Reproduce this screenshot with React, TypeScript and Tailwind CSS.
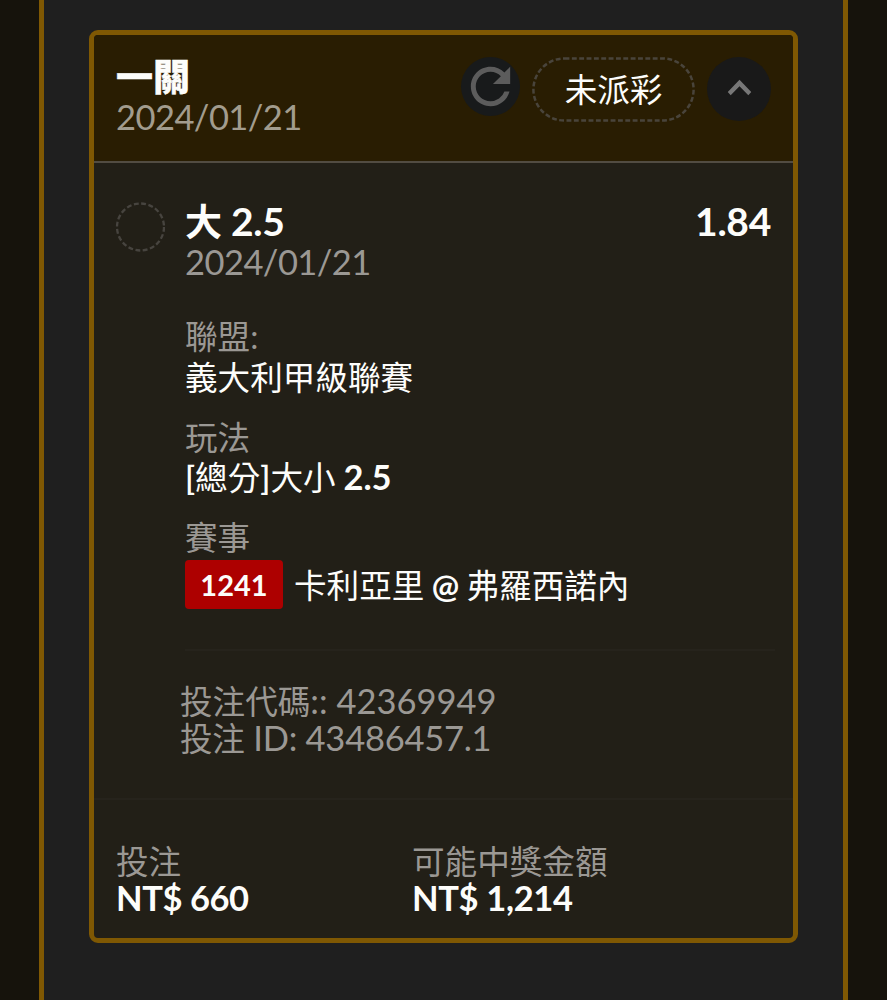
import React from 'react';

const Han: React.FC<{ children: React.ReactNode; className?: string }> = ({ children, className = 'text-[32.6px]' }) => (
    <span className={className}>{children}</span>
);

const Detail: React.FC<{ label: string; children: React.ReactNode }> = ({ label, children }) => (
    <div className="leading-[40px]">
        <div className="h-[40.5px] text-[#9b9894]"><Han>{label}</Han></div>
        <div className="h-10">{children}</div>
    </div>
);

const RefreshIcon = () => (
    <svg viewBox="0 0 24 24" className="size-[59px]" fill="#5c5c5c">
        <path d="M17.65 6.35A7.958 7.958 0 0 0 12 4c-4.42 0-7.99 3.58-7.99 8s3.57 8 7.99 8c3.73 0 6.84-2.55 7.73-6h-2.08A5.99 5.99 0 0 1 12 18c-3.31 0-6-2.69-6-6s2.69-6 6-6c1.66 0 3.14.69 4.22 1.78L13 11h7V4z" />
    </svg>
);

const ChevronUpIcon = () => (
    <svg viewBox="0 0 24 24" className="-mt-[3px] size-[47px]" fill="#777777">
        <path d="M12 8l-6 6.3 1.5 1.7L12 11.3l4.5 4.7L18 14.3z" />
    </svg>
);

export default function App() {
    return (
        <div
            className="h-[1000px] w-[887px] overflow-hidden bg-[#16130c] pr-[39px] pl-[39px] text-[34.5px] whitespace-nowrap text-[#fdfdfb]"
            style={{ fontFamily: 'Lato, "Noto Sans CJK TC", sans-serif' }}
        >
            <div className="h-full border-x-5 border-[#7f5803] bg-[#1f1f1f] px-[45px] pt-[30px]">
                <div className="flex h-[913px] flex-col overflow-hidden rounded-[9px] border-5 border-[#7f5803] bg-[#221f17]">
                    {/* Header */}
                    <div className="flex h-[128px] shrink-0 justify-between border-b-2 border-[#524c42] bg-[#291d02] pt-[21px] pr-[22px] pl-[22px]">
                        <div className="leading-[40px]">
                            <div className="h-[41px] text-[39px] font-black [-webkit-text-stroke:0.4px_currentColor]"><Han className="text-[37px]">一關</Han></div>
                            <div className="h-10 tracking-[-0.55px] text-[#a29c8e]">2024/01/21</div>
                        </div>
                        <div className="mt-px flex items-start">
                            <button className="mr-[12px] flex size-[59px] items-center justify-center rounded-full bg-[#181a1b]">
                                <RefreshIcon />
                            </button>
                            <div className="relative mr-[12px] flex h-[65px] w-[163px] items-center justify-center">
                                <svg className="absolute inset-0" width="163" height="65" fill="none">
                                    <rect x="1.4" y="1.4" width="160.2" height="62.2" rx="31.1" stroke="#49443b" strokeWidth="2.5" strokeDasharray="4.9 2.45" />
                                </svg>
                                <Han className="pt-[2px] text-[32.6px]">未派彩</Han>
                            </div>
                            <button className="flex size-[64px] items-center justify-center rounded-full bg-[#191919]">
                                <ChevronUpIcon />
                            </button>
                        </div>
                    </div>

                    {/* Selection */}
                    <div className="flex h-[637px] shrink-0 border-b-2 border-[#26231c] pt-[38px] pr-[18px] pl-[21px]">
                        <svg className="mt-px mr-[20px] size-[50px] shrink-0" viewBox="0 0 50 50" fill="none">
                            <circle cx="25.5" cy="25" r="23.5" stroke="#47443f" strokeWidth="2.3" strokeDasharray="4.9 2.48" />
                        </svg>
                        <div className="flex-1">
                            <div className="flex h-[41px] justify-between pr-[4px] text-[39px] leading-[40px] font-bold tracking-[-0.3px]">
                                <div><Han className="text-[37px]">大</Han> 2.5</div>
                                <div>1.84</div>
                            </div>
                            <div className="h-10 leading-[40px] tracking-[-0.55px] text-[#9b9894]">2024/01/21</div>

                            <div className="mt-[34px] flex flex-col gap-5">
                                <Detail label="聯盟:"><Han>義大利甲級聯賽</Han></Detail>
                                <Detail label="玩法">
                                    <Han><span className="font-semibold">[</span>總分<span className="font-semibold">]</span>大小</Han> <b className="-ml-px">2.5</b>
                                </Detail>
                                <div className="leading-[40px]">
                                    <div className="h-10 text-[#9b9894]"><Han>賽事</Han></div>
                                    <div className="mt-[3px] flex h-[49px] items-center">
                                        <span className="mr-[11px] flex h-[49px] w-[98px] items-center justify-center rounded-[4px] bg-[#ad0000] text-[29px] font-bold">1241</span>
                                        <Han className="pt-[2px] text-[32.6px]">卡利亞里 <span className="-mx-px font-bold">@</span> 弗羅西諾內</Han>
                                    </div>
                                </div>
                            </div>

                            <div className="mt-[40px] h-[2px] bg-[#26231c]" />

                            <div className="mt-[31px] -ml-[5px] leading-[37px] text-[#9b9894]">
                                <div className="h-[37px]"><Han>投注代碼</Han>:: 42369949</div>
                                <div className="h-[37px] tracking-[-0.25px]"><Han>投注</Han> ID: 43486457.1</div>
                            </div>
                        </div>
                    </div>

                    {/* Totals */}
                    <div className="flex pt-[42px] pl-[22px] leading-[37px]">
                        <div className="w-[296px]">
                            <div className="h-[37px] text-[#9b9894]"><Han>投注</Han></div>
                            <div className="h-[37px] font-bold tracking-[-0.45px]">NT$ 660</div>
                        </div>
                        <div>
                            <div className="h-[37px] text-[#9b9894]"><Han>可能中獎金額</Han></div>
                            <div className="h-[37px] font-bold tracking-[-0.35px]">NT$ 1,214</div>
                        </div>
                    </div>
                </div>
            </div>
        </div>
    );
}
